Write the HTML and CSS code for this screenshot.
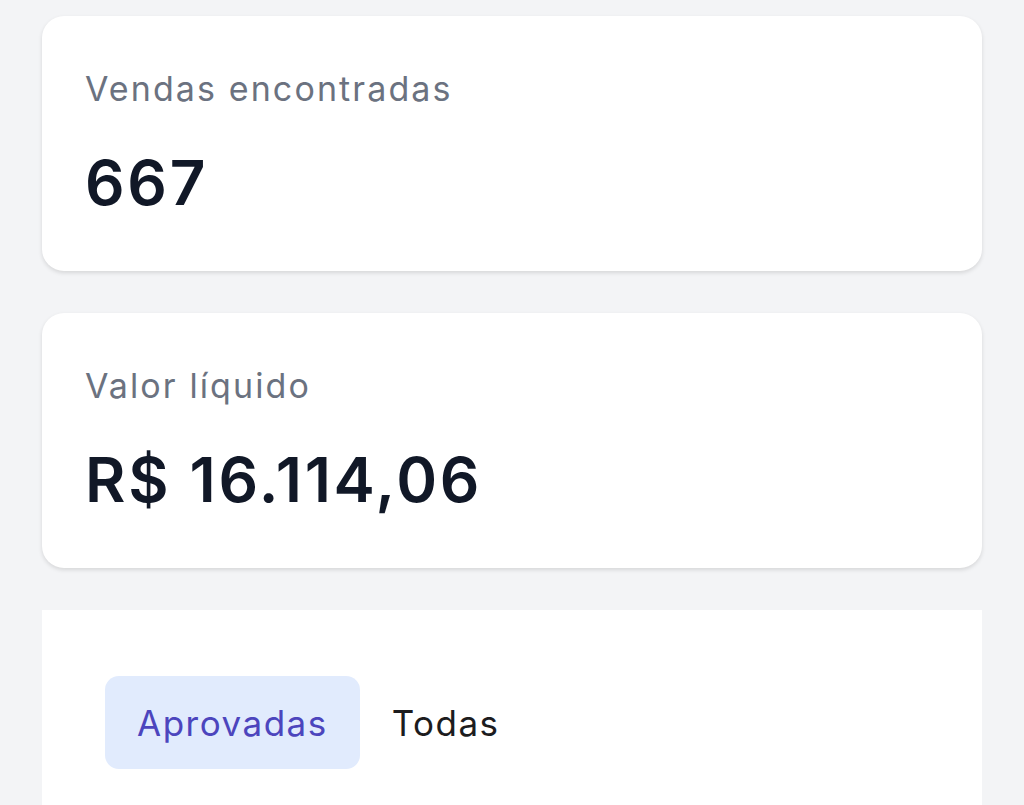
FILE: index.html
```html
<!DOCTYPE html>
<html lang="pt-BR">
<head>
    <meta charset="UTF-8">
    <meta name="viewport" content="width=device-width, initial-scale=1.0">
    <title>Vendas</title>
    <link rel="stylesheet" href="styles.css">
</head>
<body>
<!-- Resumo ---------------------------------------------------------------->
 <div class="stat-card">
    <p class="stat-label">Vendas encontradas</p>
    <p class="stat-value">667</p>
 </div>

 <div class="stat-card">
    <p class="stat-label">Valor líquido</p>
    <p class="stat-value">R$ 16.114,06</p>
 </div>

<!-- Lista de vendas ---------------------------------------------------------------->
 <div class="sales-panel">
    <div class="tabs">
        <button class="tab tab-active">Aprovadas</button>
        <button class="tab">Todas</button>
    </div>
 </div>
</body>
</html>
```

FILE: styles.css
```css
body {
  font-family: Inter, "Noto Sans", sans-serif;
  margin: 0;
  padding: 16px 42px 0;
  background-color: #f3f4f6;
}
.stat-card {
  background-color: #fff;
  border-radius: 22px;
  padding: 52px 43px 51px;
  margin-bottom: 42px;
  box-shadow: 0 2px 4px rgba(0, 0, 0, 0.12);
}
.stat-card p {
  margin: 0;
}
.stat-label {
  font-size: 34px;
  line-height: 41px;
  color: #6b7280;
  letter-spacing: 2.1px;
}
.stat-value {
  margin-top: 37px !important;
  font-size: 62px;
  line-height: 74px;
  font-weight: 600;
  color: #111827;
  letter-spacing: 2.7px;
}
.sales-panel {
  background-color: #fff;
  padding: 66px 63px 37px;
}
.tabs {
  display: flex;
}
.tab {
  font-family: inherit;
  font-size: 35px;
  letter-spacing: 1.5px;
  height: 93px;
  padding: 0 32px;
  border: none;
  border-radius: 14px;
  background: none;
  color: #1c1c1e;
  cursor: pointer;
}
.tab-active {
  background-color: #e1ebfd;
  color: #4c45bd;
}
```
